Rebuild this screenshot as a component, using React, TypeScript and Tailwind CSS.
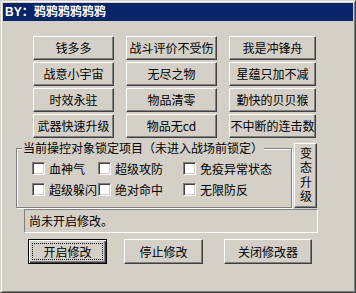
import type { ReactNode } from "react"

const face = "bg-[#d4d0c8]"

function WinButton({
  className = "",
  children,
  isDefault = false,
}: {
  className?: string
  children: ReactNode
  isDefault?: boolean
}) {
  const edge = isDefault
    ? "border border-black shadow-[inset_1px_1px_#fff,inset_-1px_-1px_#404040,inset_-2px_-2px_#808080] outline-1 outline-dotted outline-black outline-offset-[-5px]"
    : "border border-t-white border-l-white border-b-[#404040] border-r-[#404040] shadow-[inset_-1px_-1px_#808080]"
  return (
    <div
      className={`${face} ${edge} flex items-center justify-center text-[12px] leading-[14px] text-black ${className}`}
    >
      {children}
    </div>
  )
}

function CheckItem({ label, className = "" }: { label: string; className?: string }) {
  return (
    <div className={`flex items-center h-[13px] ${className}`}>
      <span className="w-[13px] h-[13px] shrink-0 bg-white border border-t-[#808080] border-l-[#808080] border-b-white border-r-white shadow-[inset_1px_1px_#404040,inset_-1px_-1px_#d4d0c8]" />
      <span className="ml-[4px] text-[12px] leading-[16px] whitespace-nowrap">{label}</span>
    </div>
  )
}

const rows = [
  ["钱多多", "战斗评价不受伤", "我是冲锋舟"],
  ["战意小宇宙", "无尽之物", "星蕴只加不减"],
  ["时效永驻", "物品清零", "勤快的贝贝猴"],
  ["武器快速升级", "物品无cd", "不中断的连击数"],
]

export default function App() {
  return (
    <div
      className={`w-[356px] h-[293px] ${face} border border-t-[#d4d0c8] border-l-[#d4d0c8] border-b-[#404040] border-r-[#404040] shadow-[inset_1px_1px_#fff,inset_-1px_-1px_#808080] p-[2px] text-black`}
      style={{ fontFamily: '"Noto Sans CJK SC", "Liberation Sans", sans-serif' }}
    >
      {/* title bar */}
      <div className="h-[18px] bg-[#0a246a] pl-[2px] flex items-center">
        <span
          className="text-white font-bold text-[12px] leading-[18px]"
          style={{ fontFamily: '"Liberation Sans", "Noto Sans CJK SC", sans-serif' }}
        >
          BY：鸦鸦鸦鸦鸦鸦
        </span>
      </div>

      {/* cheat buttons */}
      <div className="ml-[30px] mt-[15px] grid grid-cols-[81px_91px_87px] gap-x-[12px] gap-y-[2px]">
        {rows.flat().map((t) => (
          <WinButton key={t} className="h-[24px]">
            {t}
          </WinButton>
        ))}
      </div>

      {/* lock group */}
      <div className="flex items-start ml-[13px] mt-[3px]">
        <fieldset className="w-[276px] h-[67px] border border-[#808080] shadow-[inset_1px_1px_#fff,1px_1px_#fff] p-0">
          <legend className={`ml-[5px] px-[1px] ${face} text-[12px] leading-[14px]`}>
            当前操控对象锁定项目（未进入战场前锁定）
          </legend>
          <div className="pl-[15px] pt-[7px] flex flex-col gap-[8px]">
            <div className="flex">
              <CheckItem label="血神气" className="w-[66px]" />
              <CheckItem label="超级攻防" className="w-[85px]" />
              <CheckItem label="免疫异常状态" />
            </div>
            <div className="flex">
              <CheckItem label="超级躲闪" className="w-[66px]" />
              <CheckItem label="绝对命中" className="w-[85px]" />
              <CheckItem label="无限防反" />
            </div>
          </div>
        </fieldset>
        <WinButton className="ml-[2px] mt-[2px] w-[23px] h-[65px]">
          <span className="[writing-mode:vertical-rl] [text-orientation:upright] tracking-[2.5px] leading-[14px]">
            变态升级
          </span>
        </WinButton>
      </div>

      {/* status */}
      <div className="ml-[21px] mt-[1px] w-[294px] h-[24px] border border-t-[#808080] border-l-[#808080] border-b-white border-r-white flex items-center pl-[4px] text-[12px] leading-[14px]">
        尚未开启修改。
      </div>

      {/* bottom buttons */}
      <div className="flex ml-[25px] mt-[6px]">
        <WinButton isDefault className="w-[79px] h-[25px]">
          开启修改
        </WinButton>
        <WinButton className="ml-[17px] w-[79px] h-[25px]">停止修改</WinButton>
        <WinButton className="ml-[21px] w-[88px] h-[25px]">关闭修改器</WinButton>
      </div>
    </div>
  )
}
